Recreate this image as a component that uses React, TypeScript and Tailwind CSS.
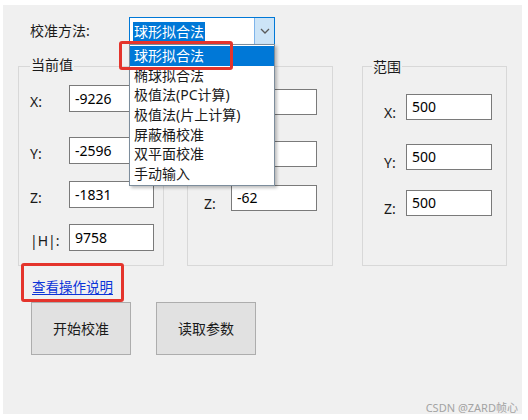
import React from "react";

const methods = [
  "球形拟合法",
  "椭球拟合法",
  "极值法(PC计算)",
  "极值法(片上计算)",
  "屏蔽桶校准",
  "双平面校准",
  "手动输入",
];

function TextBox({ value, w = "w-[86px]", h = "h-[26px]" }: { value: string; w?: string; h?: string }) {
  return (
    <div className={`${w} ${h} bg-white border border-[#7a7a7a] pl-[5px] flex items-center text-[14px] leading-[18px] text-black`}>
      {value}
    </div>
  );
}

function Chevron() {
  return (
    <svg width="10" height="6" viewBox="0 0 10 6" fill="none">
      <path d="M1 1l4 4 4-4" stroke="#5a5a5a" strokeWidth="1.3" />
    </svg>
  );
}

export default function App() {
  return (
    <div className="w-[528px] h-[420px] bg-white pt-[5px] pl-[3px]">
      <div className="relative w-[519px] h-[409px] bg-[#f0f0f0] text-[#1a1a1a] font-['Noto_Sans','Noto_Sans_CJK_SC',sans-serif]">
        {/* calibration method row */}
        <div className="flex items-center pl-[27px] pt-[12px]">
          <div className="w-[99px] text-[14px] leading-[18px]">校准方法:</div>
          <div className="w-[146px] h-[28px] bg-white border border-[#0078d7] flex items-center">
            <div className="flex-1 pl-[3px]">
              <span className="bg-[#0078d7] text-white text-[14px] leading-[18px] px-[1px]">球形拟合法</span>
            </div>
            <div className="w-[20px] h-full bg-[#cce4f7] border-l border-[#7eb4ea] flex items-center justify-center">
              <Chevron />
            </div>
          </div>
        </div>

        {/* group boxes */}
        <div className="flex mt-[21px] pl-[15px]">
          <div className="relative w-[146px] h-[200px] border border-[#d8d8d8]">
            <span className="absolute -top-[12px] left-[11px] bg-[#f0f0f0] px-[1px] text-[14px] leading-[20px]">当前值</span>
            <div className="flex flex-col pt-[18px] pl-[11px] text-[14px] leading-[18px]">
              <div className="flex items-start">
                <span className="w-[39px] mt-[8px]">X:</span>
                <TextBox value="-9226" w="w-[85px]" h="h-[27px]" />
              </div>
              <div className="flex items-start mt-[25px]">
                <span className="w-[39px] mt-[8px]">Y:</span>
                <TextBox value="-2596" w="w-[85px]" h="h-[27px]" />
              </div>
              <div className="flex items-start mt-[17px]">
                <span className="w-[39px] mt-[8px]">Z:</span>
                <TextBox value="-1831" w="w-[85px]" h="h-[27px]" />
              </div>
              <div className="flex items-start mt-[16px]">
                <span className="w-[39px] mt-[8px]">|H|:</span>
                <TextBox value="9758" w="w-[85px]" h="h-[27px]" />
              </div>
            </div>
          </div>

          <div className="relative w-[146px] h-[200px] border border-[#d8d8d8] ml-[23px]">
            <div className="flex flex-col pt-[22px] pl-[43px] text-[14px] leading-[18px]">
              <TextBox value="" />
              <div className="mt-[26px]">
                <TextBox value="" />
              </div>
              <div className="flex items-start mt-[18px] -ml-[27px]">
                <span className="w-[27px] mt-[10px]">Z:</span>
                <TextBox value="-62" />
              </div>
            </div>
          </div>

          <div className="relative w-[145px] h-[200px] border border-[#d8d8d8] ml-[29px]">
            <span className="absolute -top-[10px] left-[9px] bg-[#f0f0f0] px-[1px] text-[14px] leading-[20px]">范围</span>
            <div className="flex flex-col pt-[27px] pl-[21px] text-[14px] leading-[18px]">
              <div className="flex items-start">
                <span className="w-[22px] mt-[10px]">X:</span>
                <TextBox value="500" />
              </div>
              <div className="flex items-start mt-[22px]">
                <span className="w-[22px] mt-[10px]">Y:</span>
                <TextBox value="500" />
              </div>
              <div className="flex items-start mt-[18px]">
                <span className="w-[22px] mt-[10px]">Z:</span>
                <TextBox value="500" />
              </div>
            </div>
          </div>
        </div>

        {/* help link */}
        <div className="pl-[29px] mt-[11px] h-[20px] flex items-center">
          <span className="text-[13.5px] leading-[18px] text-[#0b35d8] underline underline-offset-2">查看操作说明</span>
        </div>

        {/* buttons */}
        <div className="flex gap-[25px] pl-[28px] mt-[5px]">
          <button className="w-[100px] h-[53px] bg-[#e1e1e1] border border-[#adadad] text-[14px] leading-[18px] text-[#1a1a1a]">
            开始校准
          </button>
          <button className="w-[100px] h-[53px] bg-[#e1e1e1] border border-[#adadad] text-[14px] leading-[18px] text-[#1a1a1a]">
            读取参数
          </button>
        </div>

        {/* open dropdown list */}
        <div className="absolute left-[126px] top-[39px] w-[146px] bg-white border border-[#7d8d9c] pt-[1px] pb-[1px] shadow-[2px_2px_3px_rgba(0,0,0,0.25)]">
          {methods.map((m, i) => (
            <div
              key={m}
              className={`h-[19.7px] pl-[4px] flex items-center text-[14px] leading-[18px] ${
                i === 0 ? "bg-[#0078d7] text-white" : "text-[#1a1a1a]"
              }`}
            >
              {m}
            </div>
          ))}
        </div>

        {/* red annotation boxes */}
        <div className="absolute left-[116px] top-[36px] w-[114px] h-[29px] border-[3px] border-[#e4342c] rounded-[3px]" />
        <div className="absolute left-[18px] top-[258px] w-[103px] h-[39px] border-[3px] border-[#e4342c] rounded-[3px]" />

        {/* watermark */}
        <span className="absolute right-[4px] bottom-0 text-[11px] leading-[13px] text-[#a3a3a3]">CSDN @ZARD帧心</span>
      </div>
    </div>
  );
}
